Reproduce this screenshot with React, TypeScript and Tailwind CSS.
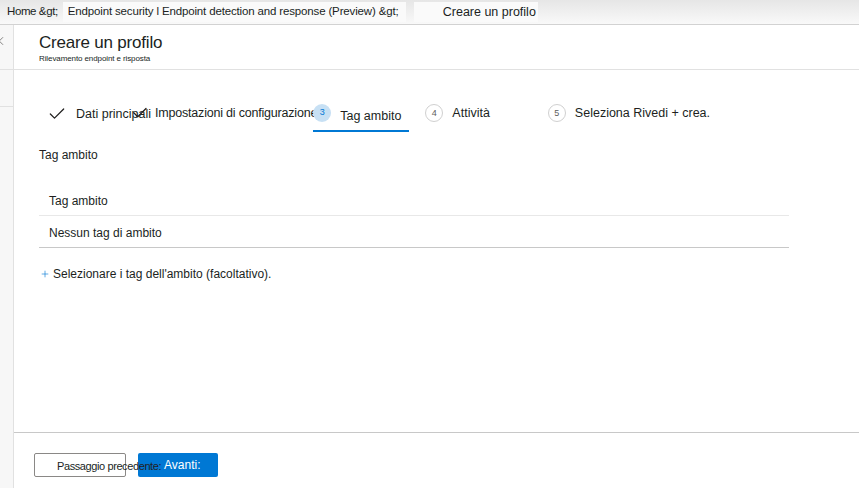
import { Check, Plus, ChevronLeft } from "lucide-react";

const font = { fontFamily: '"Liberation Sans", Arial, sans-serif' };

function StepNum({ n, active }: { n: number; active?: boolean }) {
  return (
    <span
      className={
        active
          ? "flex h-[18px] w-[18px] items-center justify-center rounded-full bg-[#c7e0f4] text-[9px] text-[#0078d4]"
          : "flex h-[18px] w-[18px] items-center justify-center rounded-full border border-[#d0d0d0] text-[9px] text-[#605e5c]"
      }
    >
      {n}
    </span>
  );
}

export default function App() {
  return (
    <div
      className="flex h-[488px] w-[859px] flex-col overflow-hidden bg-white text-[#201f1e]"
      style={font}
    >
      {/* breadcrumb */}
      <div className="flex h-[25px] shrink-0 items-center border-b border-[#d2d2d2] bg-gradient-to-b from-[#e6e6e6] to-[#f9f9f9] text-[11.5px]">
        <span className="ml-[7px] tracking-[-0.4px]">Home &amp;gt;</span>
        <span className="ml-[5px] flex h-[20px] w-[343px] items-center bg-[#fafafa] pl-[5px] tracking-[-0.15px]">
          Endpoint security l Endpoint detection and response (Preview) &amp;gt;
        </span>
        <span className="ml-[8px] flex h-[20px] items-center bg-[#fafafa] pl-[29px] pr-[2px] text-[12.5px]">
          Creare un profilo
        </span>
      </div>

      <div className="flex flex-1">
        {/* left strip */}
        <div className="flex w-[14px] shrink-0 flex-col border-r border-[#e1e1e1] bg-[#f7f7f7]">
          <div className="flex h-[45px] items-start border-b border-[#e1e1e1] pt-[9px]">
            <ChevronLeft className="-ml-[6px] h-[14px] w-[14px] text-[#605e5c]" strokeWidth={1.3} />
          </div>
          <div className="h-[37px] border-b border-[#e1e1e1]" />
          <div className="flex-1" />
        </div>

        <div className="flex flex-1 flex-col">
          {/* header */}
          <div className="flex h-[45px] shrink-0 flex-col border-b border-[#e1e1e1] pl-[25px] pt-[8px]">
            <h1 className="text-[17px] leading-[20px] tracking-[-0.2px]">Creare un profilo</h1>
            <p className="mt-[1px] text-[8px] leading-[10px] tracking-[-0.1px]">Rilevamento endpoint e risposta</p>
          </div>

          {/* content */}
          <div className="flex flex-1 flex-col pl-[25px]">
            {/* stepper */}
            <div className="mt-[34px] flex h-[28px] items-start text-[12.5px]">
              <div className="ml-[8px] flex items-center">
                <Check className="h-[20px] w-[20px] text-[#201f1e]" strokeWidth={1.5} />
                <span className="ml-[9px]">Dati principali</span>
              </div>
              <div className="-ml-[20px] flex items-center">
                <Check className="h-[18px] w-[18px] text-[#201f1e]" strokeWidth={1.7} />
                <span className="ml-[6px] tracking-[-0.2px]">Impostazioni di configurazione</span>
              </div>
              <div className="-ml-[4px] flex h-[28px] flex-col">
                <div className="flex items-center">
                  <div className="-mt-[4px]">
                    <StepNum n={3} active />
                  </div>
                  <span className="ml-[9px] mr-[8px] mt-[3px]">Tag ambito</span>
                </div>
                <div className="mt-auto h-[2px] bg-[#0078d4]" />
              </div>
              <div className="ml-[16px] flex items-center">
                <StepNum n={4} />
                <span className="ml-[9px]">Attività</span>
              </div>
              <div className="ml-[58px] flex items-center">
                <StepNum n={5} />
                <span className="ml-[9px]">Seleziona Rivedi + crea.</span>
              </div>
            </div>

            <div className="mt-[14px] text-[12px]">Tag ambito</div>

            {/* table */}
            <div className="mt-[23px] w-[750px] text-[12px]">
              <div className="flex h-[29px] items-center border-b border-[#e8e8e8] pl-[10px]">Tag ambito</div>
              <div className="flex h-[32px] items-center border-b border-[#c8c8c8] pl-[10px] pt-[3px]">Nessun tag di ambito</div>
            </div>

            <div className="mt-[17px] flex items-center text-[12px]">
              <Plus className="ml-[1px] h-[10px] w-[10px] text-[#0078d4]" strokeWidth={1.5} />
              <span className="ml-[3px]">Selezionare i tag dell&apos;ambito (facoltativo).</span>
            </div>
          </div>

          {/* footer */}
          <div className="flex h-[56px] shrink-0 items-start border-t border-[#c8c8c8] pl-[20px] pt-[20px] text-[12px]">
            <button className="relative h-[24px] w-[92px] rounded-[2px] border border-[#8a8886] bg-white">
              <span className="absolute left-[22px] top-[4px] whitespace-nowrap text-[11px] tracking-[-0.4px]">Passaggio precedente:</span>
            </button>
            <button className="ml-[12px] flex h-[24px] w-[80px] items-center rounded-[2px] bg-[#0078d4] pl-[26px] text-white">
              Avanti:
            </button>
          </div>
        </div>
      </div>
    </div>
  );
}
